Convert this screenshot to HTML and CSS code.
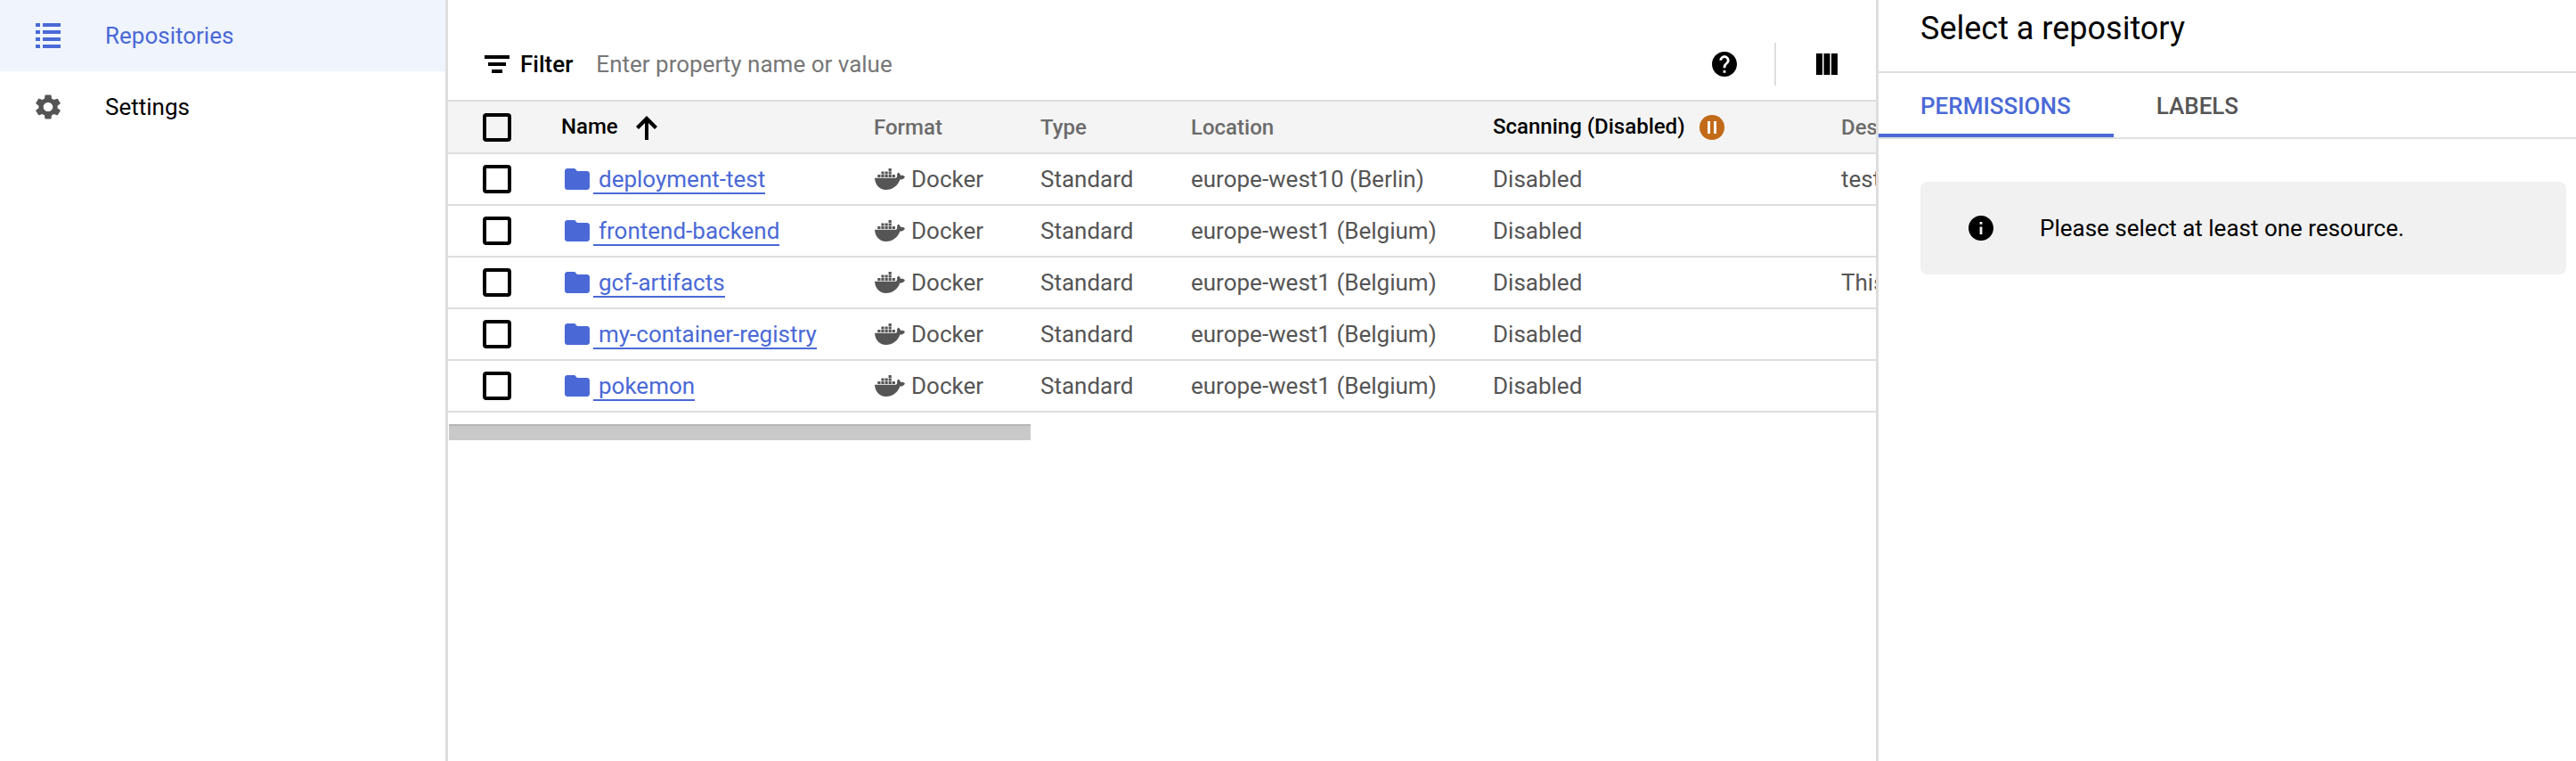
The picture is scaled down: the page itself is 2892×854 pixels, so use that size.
FILE: index.html
```html
<!DOCTYPE html>
<html lang="en">
<head>
    <meta charset="UTF-8">
    <meta name="viewport" content="width=device-width, initial-scale=1.0">
    <title>Artifact Registry - Repositories</title>
    <link rel="stylesheet" href="styles.css">
</head>
<body>
    <svg class="defs" xmlns="http://www.w3.org/2000/svg">
        <symbol id="folder" viewBox="2 4 20 16" preserveAspectRatio="none">
            <path d="M10 4H4c-1.1 0-2 .9-2 2v12c0 1.1.9 2 2 2h16c1.1 0 2-.9 2-2V8c0-1.1-.9-2-2-2h-8l-2-2z"/>
        </symbol>
        <symbol id="docker" viewBox="0 0 34 24">
            <path d="M0 10.8H23.4C24.6 10.8 25.4 9.6 25.2 7.6L25 6.6L26.6 4.4C28 5.4 28.9 6.6 29.1 8C30.8 7.5 32.8 7.9 34 9.4C32.6 11.8 30.4 12.6 28.4 12.5C26 19.4 20 24 12.6 24C5.4 24 .4 18.6 0 10.8Z"/>
            <path d="M15.6 0h3.2v3h-3.2zM7.4 3.4h3.2v3H7.4zM11.5 3.4h3.2v3h-3.2zM15.6 3.4h3.2v3h-3.2zM3.3 6.9h3.2v3H3.3zM7.4 6.9h3.2v3H7.4zM11.5 6.9h3.2v3h-3.2zM15.6 6.9h3.2v3h-3.2zM19.7 6.9h3.2v3h-3.2z"/>
        </symbol>
    </svg>

    <div class="page">
        <nav class="sidebar">
            <a class="nav-item active">
                <svg class="nav-icon" viewBox="0 0 28 28">
                    <path d="M0 0h5v4H0zM8 0h20v4H8zM0 8h5v4H0zM8 8h20v4H8zM0 16h5v4H0zM8 16h20v4H8zM0 24h5v4H0zM8 24h20v4H8z"/>
                </svg>
                Repositories
            </a>
            <a class="nav-item">
                <svg class="nav-icon" viewBox="2.5 2 19 20" preserveAspectRatio="none">
                    <path d="M19.14 12.94c.04-.3.06-.61.06-.94 0-.32-.02-.64-.07-.94l2.03-1.58c.18-.14.23-.41.12-.61l-1.92-3.32c-.12-.22-.37-.29-.59-.22l-2.39.96c-.5-.38-1.03-.7-1.62-.94l-.36-2.54c-.04-.24-.24-.41-.48-.41h-3.84c-.24 0-.43.17-.47.41l-.36 2.54c-.59.24-1.13.57-1.62.94l-2.39-.96c-.22-.08-.47 0-.59.22L2.74 8.87c-.12.21-.08.47.12.61l2.03 1.58c-.05.3-.09.63-.09.94s.02.64.07.94l-2.03 1.58c-.18.14-.23.41-.12.61l1.92 3.32c.12.22.37.29.59.22l2.39-.96c.5.38 1.03.7 1.62.94l.36 2.54c.05.24.24.41.48.41h3.84c.24 0 .44-.17.47-.41l.36-2.54c.59-.24 1.13-.56 1.62-.94l2.39.96c.22.08.47 0 .59-.22l1.92-3.32c.12-.22.07-.47-.12-.61l-2.01-1.58zM12 15.6c-1.98 0-3.6-1.62-3.6-3.6s1.62-3.6 3.6-3.6 3.6 1.62 3.6 3.6-1.62 3.6-3.6 3.6z"/>
                </svg>
                Settings
            </a>
        </nav>

        <main class="content">
            <div class="toolbar">
                <svg class="filter-icon" viewBox="0 0 28 20">
                    <path d="M0 0h28v4H0zM4 8h20v4H4zM8 16h12v4H8z"/>
                </svg>
                <span class="filter-label">Filter</span>
                <span class="filter-input">Enter property name or value</span>
                <svg class="help-icon" viewBox="2 2 20 20">
                    <path d="M12 2C6.48 2 2 6.48 2 12s4.48 10 10 10 10-4.48 10-10S17.52 2 12 2zm1 17h-2v-2h2v2zm2.07-7.75l-.9.92C13.45 12.9 13 13.5 13 15h-2v-.5c0-1.1.45-2.1 1.17-2.83l1.24-1.26c.37-.36.59-.86.59-1.41 0-1.1-.9-2-2-2s-2 .9-2 2H8c0-2.21 1.79-4 4-4s4 1.79 4 4c0 .88-.36 1.68-.93 2.25z"/>
                </svg>
                <span class="toolbar-divider"></span>
                <svg class="columns-icon" viewBox="0 0 24 24">
                    <path d="M0 0h7v24H0zM8.5 0h7v24h-7zM17 0h7v24h-7z"/>
                </svg>
            </div>

            <table class="repo-table">
                <colgroup>
                    <col class="col-check">
                    <col class="col-name">
                    <col class="col-format">
                    <col class="col-type">
                    <col class="col-location">
                    <col class="col-scanning">
                    <col class="col-desc">
                </colgroup>
                <thead>
                    <tr>
                        <th><span class="checkbox"></span></th>
                        <th class="strong">
                            Name
                            <svg class="sort-icon" viewBox="0 0 24 27">
                                <path d="M12 0L24 12L21 15L14 8V27H10V8L3 15L0 12Z"/>
                            </svg>
                        </th>
                        <th>Format</th>
                        <th>Type</th>
                        <th>Location</th>
                        <th class="strong">
                            Scanning (Disabled)
                            <span class="pause-badge"></span>
                        </th>
                        <th>Description</th>
                    </tr>
                </thead>
                <tbody>
                    <tr>
                        <td><span class="checkbox"></span></td>
                        <td class="name-cell"><svg class="folder-icon"><use href="#folder"/></svg><a class="repo-link">deployment-test</a></td>
                        <td><svg class="docker-icon"><use href="#docker"/></svg>Docker</td>
                        <td>Standard</td>
                        <td>europe-west10 (Berlin)</td>
                        <td>Disabled</td>
                        <td>test</td>
                    </tr>
                    <tr>
                        <td><span class="checkbox"></span></td>
                        <td class="name-cell"><svg class="folder-icon"><use href="#folder"/></svg><a class="repo-link">frontend-backend</a></td>
                        <td><svg class="docker-icon"><use href="#docker"/></svg>Docker</td>
                        <td>Standard</td>
                        <td>europe-west1 (Belgium)</td>
                        <td>Disabled</td>
                        <td></td>
                    </tr>
                    <tr>
                        <td><span class="checkbox"></span></td>
                        <td class="name-cell"><svg class="folder-icon"><use href="#folder"/></svg><a class="repo-link">gcf-artifacts</a></td>
                        <td><svg class="docker-icon"><use href="#docker"/></svg>Docker</td>
                        <td>Standard</td>
                        <td>europe-west1 (Belgium)</td>
                        <td>Disabled</td>
                        <td>This</td>
                    </tr>
                    <tr>
                        <td><span class="checkbox"></span></td>
                        <td class="name-cell"><svg class="folder-icon"><use href="#folder"/></svg><a class="repo-link">my-container-registry</a></td>
                        <td><svg class="docker-icon"><use href="#docker"/></svg>Docker</td>
                        <td>Standard</td>
                        <td>europe-west1 (Belgium)</td>
                        <td>Disabled</td>
                        <td></td>
                    </tr>
                    <tr>
                        <td><span class="checkbox"></span></td>
                        <td class="name-cell"><svg class="folder-icon"><use href="#folder"/></svg><a class="repo-link">pokemon</a></td>
                        <td><svg class="docker-icon"><use href="#docker"/></svg>Docker</td>
                        <td>Standard</td>
                        <td>europe-west1 (Belgium)</td>
                        <td>Disabled</td>
                        <td></td>
                    </tr>
                </tbody>
            </table>
            <div class="scrollbar"></div>
        </main>

        <aside class="panel">
            <h2 class="panel-title">Select a repository</h2>
            <div class="tabs">
                <span class="tab active">Permissions</span>
                <span class="tab">Labels</span>
            </div>
            <div class="message">
                <svg class="info-icon" viewBox="2 2 20 20">
                    <path d="M12 2C6.48 2 2 6.48 2 12s4.48 10 10 10 10-4.48 10-10S17.52 2 12 2zm1 15h-2v-6h2v6zm0-8h-2V7h2v2z"/>
                </svg>
                Please select at least one resource.
            </div>
        </aside>
    </div>
</body>
</html>
```

FILE: styles.css
```css
body {
    font-family: Roboto, "Liberation Sans", sans-serif;
    margin: 0;
    background-color: white;
    color: #000;
}
.defs {
    display: none;
}
.page {
    display: flex;
    width: 2892px;
    height: 854px;
    overflow: hidden;
}

/* left nav */
.sidebar {
    flex: none;
    width: 500px;
    border-right: 3px solid #dedede;
}
.nav-item {
    display: flex;
    align-items: center;
    gap: 50px;
    height: 80px;
    padding-left: 40px;
    font-size: 26px;
}
.nav-item.active {
    background-color: #eff4fd;
    color: #4a69d6;
}
.nav-icon {
    width: 28px;
    height: 28px;
    fill: #555;
}
.nav-item.active .nav-icon {
    fill: #4a69d6;
}

/* table area */
.content {
    flex: none;
    width: 1603px;
    overflow: hidden;
}
.toolbar {
    display: flex;
    align-items: center;
    box-sizing: border-box;
    height: 112px;
    padding: 32px 0 0 41px;
    width: 1560px;
}
.filter-icon {
    width: 28px;
    height: 20px;
    margin-right: 12px;
}
.filter-label {
    font-size: 26px;
    font-weight: 500;
    margin-right: 26px;
}
.filter-input {
    flex: 1;
    font-size: 26px;
    color: #777;
}
.help-icon {
    width: 28px;
    height: 28px;
}
.toolbar-divider {
    width: 2px;
    height: 48px;
    margin: 0 45px 0 42px;
    background-color: #dedede;
}
.columns-icon {
    width: 24px;
    height: 24px;
}

.repo-table {
    border-collapse: collapse;
    table-layout: fixed;
    width: 1640px;
    border-top: 2px solid #dedede;
    font-size: 26px;
    color: #555;
}
.col-check { width: 127px; }
.col-name { width: 351px; }
.col-format { width: 187px; }
.col-type { width: 169px; }
.col-location { width: 339px; }
.col-scanning { width: 391px; }
.repo-table th {
    height: 57px;
    padding: 0;
    background-color: #f4f4f4;
    border-bottom: 2px solid #dedede;
    text-align: left;
    font-size: 24px;
    font-weight: 500;
    color: #6b6b6b;
    white-space: nowrap;
}
.repo-table th.strong {
    color: #000;
}
.repo-table td {
    height: 56px;
    padding: 0;
    border-bottom: 2px solid #dedede;
    white-space: nowrap;
}
.repo-table td.name-cell {
    height: 54px;
    padding-top: 2px;
}
.checkbox {
    display: block;
    box-sizing: border-box;
    width: 32px;
    height: 32px;
    margin-left: 39px;
    border: 4px solid #000;
    border-radius: 4px;
}
.sort-icon {
    width: 24px;
    height: 27px;
    margin-left: 14px;
    vertical-align: middle;
}
.pause-badge {
    display: inline-block;
    width: 28px;
    height: 28px;
    margin-left: 11px;
    border-radius: 50%;
    background: linear-gradient(to right, transparent 9px, white 9px, white 12px, transparent 12px, transparent 16px, white 16px, white 19px, transparent 19px), #c26a18;
    background-size: 100% 14px;
    background-position: center;
    background-repeat: no-repeat;
    background-color: #c26a18;
    vertical-align: middle;
}
.folder-icon {
    width: 28px;
    height: 24px;
    margin-left: 4px;
    vertical-align: -3px;
    fill: #4a69d6;
}
.repo-link {
    display: inline-block;
    margin-left: 4px;
    padding-left: 6px;
    line-height: 30px;
    border-bottom: 2px solid #4a69d6;
    color: #4a69d6;
}
.docker-icon {
    width: 34px;
    height: 24px;
    margin: 0 7px 0 1px;
    vertical-align: -3px;
    fill: #555;
}
.scrollbar {
    box-sizing: border-box;
    width: 653px;
    height: 18px;
    margin: 13px 0 0 1px;
    background-color: #c9c9c9;
    border-top: 2px solid #b5b5b5;
}

/* right panel */
.panel {
    flex: 1;
    border-left: 3px solid #dedede;
    background-color: white;
}
.panel-title {
    box-sizing: border-box;
    height: 82px;
    margin: 0;
    padding: 11px 0 0 47px;
    border-bottom: 2px solid #dedede;
    font-size: 36px;
    font-weight: 400;
}
.tabs {
    display: flex;
    height: 72px;
    border-bottom: 2px solid #dedede;
}
.tab {
    box-sizing: border-box;
    height: 72px;
    padding: 22px 48px 0 47px;
    font-size: 26px;
    font-weight: 500;
    text-transform: uppercase;
    color: #555;
}
.tab + .tab {
    padding-left: 48px;
}
.tab.active {
    color: #4a69d6;
    border-bottom: 4px solid #4a69d6;
}
.message {
    display: flex;
    align-items: center;
    gap: 52px;
    box-sizing: border-box;
    width: 725px;
    height: 104px;
    margin: 48px 0 0 47px;
    padding-left: 54px;
    border-radius: 8px;
    background-color: #f1f1f1;
    font-size: 26px;
}
.info-icon {
    flex: none;
    width: 28px;
    height: 28px;
}
```
